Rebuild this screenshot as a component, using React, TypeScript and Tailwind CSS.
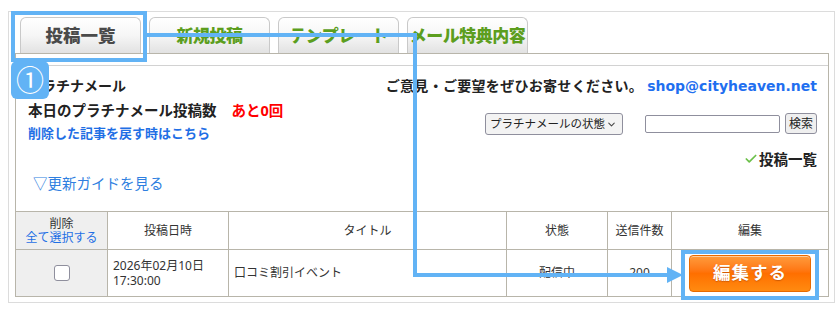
import { Check, ChevronDown } from 'lucide-react';

const TABS = [
  { id: 1, label: '投稿一覧', active: true },
  { id: 2, label: '新規投稿', active: false },
  { id: 3, label: 'テンプレート', active: false },
  { id: 4, label: 'メール特典内容', active: false },
];

const COLS = 'grid grid-cols-[91px_121px_278px_101px_64px_157px]';

export default function App() {
  return (
    <div
      className="relative w-[840px] h-[312px] overflow-hidden bg-white text-[#222]"
      style={{ fontFamily: '"Noto Sans", "Noto Sans CJK JP", sans-serif' }}
    >
      {/* Outer frame */}
      <div className="ml-[8px] mt-[11px] w-[827px] border border-[#dcdcdc] pl-[6px] pr-[5px] pt-[5px] pb-[5px]">
        {/* Tabs */}
        <div className="flex gap-[8px] pl-[5px] h-[36px]">
          {TABS.map((tab) => (
            <div
              key={tab.id}
              className="w-[121px] h-[36px] rounded-t-[6px] border border-b-0 border-[#c9c9c9] bg-linear-to-b from-white via-[#f6f6f6] to-[#e2e2e2] flex items-center justify-center"
            >
              <span
                className={
                  tab.active
                    ? 'text-[17.5px] font-black text-[#4a4a4a] leading-none whitespace-nowrap'
                    : 'text-[17px] font-black text-[#5c9e1e] leading-none whitespace-nowrap tracking-[-0.5px]'
                }
              >
                {tab.label}
              </span>
            </div>
          ))}
        </div>

        {/* Panel */}
        <div className="border border-[#b8b5aa]">
          <div className="h-[12px] border-b border-[#d2d2d2]" />

          <div className="pl-[12px] pr-[11px]">
            <div className="mt-[10px] h-[20px] flex items-center justify-between">
              <span className="text-[14px] font-bold leading-none">プラチナメール</span>
              <span className="flex items-center text-[14px] font-bold leading-none whitespace-nowrap tracking-[0.3px]">
                ご意見・ご要望をぜひお寄せください。
                <span
                  className="text-[#1f6ff0] ml-[4px] text-[14px] tracking-normal"
                  style={{ fontFamily: '"DejaVu Sans", sans-serif' }}
                >
                  shop@cityheaven.net
                </span>
              </span>
            </div>

            <div className="mt-[4px] flex justify-between">
              <div className="flex flex-col">
                <div className="h-[20px] flex items-center text-[14.5px] font-bold leading-none">
                  本日のプラチナメール投稿数
                  <span className="ml-[15px] text-[#ff0000]">あと0回</span>
                </div>
                <div className="mt-[3px] h-[20px] flex items-center text-[13px] font-bold text-[#1f6fe5] leading-none">
                  削除した記事を戻す時はこちら
                </div>
              </div>

              <div className="pt-[13px] flex items-start">
                <div className="w-[138px] h-[22px] rounded-[3px] border border-[#8f8f9d] bg-[#f3f3f3] flex items-center justify-between pl-[4px] pr-[5px]">
                  <span className="text-[11.5px] leading-none text-[#222] whitespace-nowrap">プラチナメールの状態</span>
                  <ChevronDown size={11} strokeWidth={2.2} className="text-[#444] shrink-0" />
                </div>
                <div className="ml-[22px] mt-[2px] w-[135px] h-[18px] rounded-[2px] border border-[#8f8f9d] bg-white" />
                <div className="ml-[5px] w-[32px] h-[21px] rounded-[3px] border border-[#8f8f9d] bg-[#efefef] flex items-center justify-center text-[12px] leading-none">
                  検索
                </div>
              </div>
            </div>

            <div className="mt-[6px] h-[20px] flex items-center justify-end">
              <Check size={14} strokeWidth={3} className="text-[#6cc04a] mr-[1px]" />
              <span className="text-[14.5px] font-bold leading-none">投稿一覧</span>
            </div>

            <div className="mt-[4px] h-[20px] flex items-center pl-[5px] text-[14.5px] text-[#2f7fe0] leading-none">
              ▽更新ガイドを見る
            </div>
          </div>

          {/* Table */}
          <div className="mt-[18px] text-[12px] text-[#333]">
            <div className={`${COLS} h-[38px] border-t border-[#b8b5aa]`}>
              <div className="bg-[#efefef] flex flex-col items-center justify-center leading-[14px]">
                <span>削除</span>
                <span className="text-[#1f6fe5]">全て選択する</span>
              </div>
              <div className="border-l border-[#b8b5aa] flex items-center justify-center">投稿日時</div>
              <div className="border-l border-[#b8b5aa] flex items-center justify-center">タイトル</div>
              <div className="border-l border-[#b8b5aa] flex items-center justify-center">状態</div>
              <div className="border-l border-[#b8b5aa] flex items-center justify-center">送信件数</div>
              <div className="border-l border-[#b8b5aa] flex items-center justify-center">編集</div>
            </div>
            <div className={`${COLS} h-[47px] border-t border-[#b8b5aa]`}>
              <div className="bg-[#efefef] flex items-center justify-center">
                <div className="w-[16px] h-[16px] rounded-[3px] border border-[#8f8f9d] bg-white" />
              </div>
              <div className="border-l border-[#b8b5aa] flex flex-col justify-center pl-[5px] leading-[15px]">
                <span>2026年02月10日</span>
                <span>17:30:00</span>
              </div>
              <div className="border-l border-[#b8b5aa] flex items-center pl-[5px]">口コミ割引イベント</div>
              <div className="border-l border-[#b8b5aa] flex items-center justify-center">配信中</div>
              <div className="border-l border-[#b8b5aa] flex items-center justify-center">200</div>
              <div className="border-l border-[#b8b5aa] flex items-center justify-center">
                <div className="w-[122px] h-[37px] rounded-[4px] border border-[#e86a00] bg-linear-to-b from-[#ff9b3a] via-[#ff6f00] to-[#ff8a10] shadow-[inset_0_1px_0_rgba(255,255,255,0.5)] flex items-center justify-center">
                  <span className="text-[17.5px] font-bold text-white tracking-[1px] leading-none [text-shadow:0_1px_1px_rgba(160,60,0,0.5)]">
                    編集する
                  </span>
                </div>
              </div>
            </div>
          </div>
        </div>
      </div>

      {/* Annotation overlay */}
      <svg className="absolute inset-0 pointer-events-none" width="840" height="312" viewBox="0 0 840 312">
        <rect x="13" y="13" width="132" height="47" fill="none" stroke="#62b3f5" strokeWidth="4" />
        <polyline points="145,35 415,35 415,275 670,275" fill="none" stroke="#62b3f5" strokeWidth="4" />
        <polygon points="667,267 683,275 667,283" fill="#62b3f5" />
        <rect x="683" y="252" width="134" height="46" fill="none" stroke="#62b3f5" strokeWidth="4" />
      </svg>
      <div className="absolute left-[11px] top-[61px] w-[38px] h-[38px] rounded-[6px] bg-[#62b3f5] flex items-center justify-center text-white text-[28px] leading-none">
        ①
      </div>
    </div>
  );
}
